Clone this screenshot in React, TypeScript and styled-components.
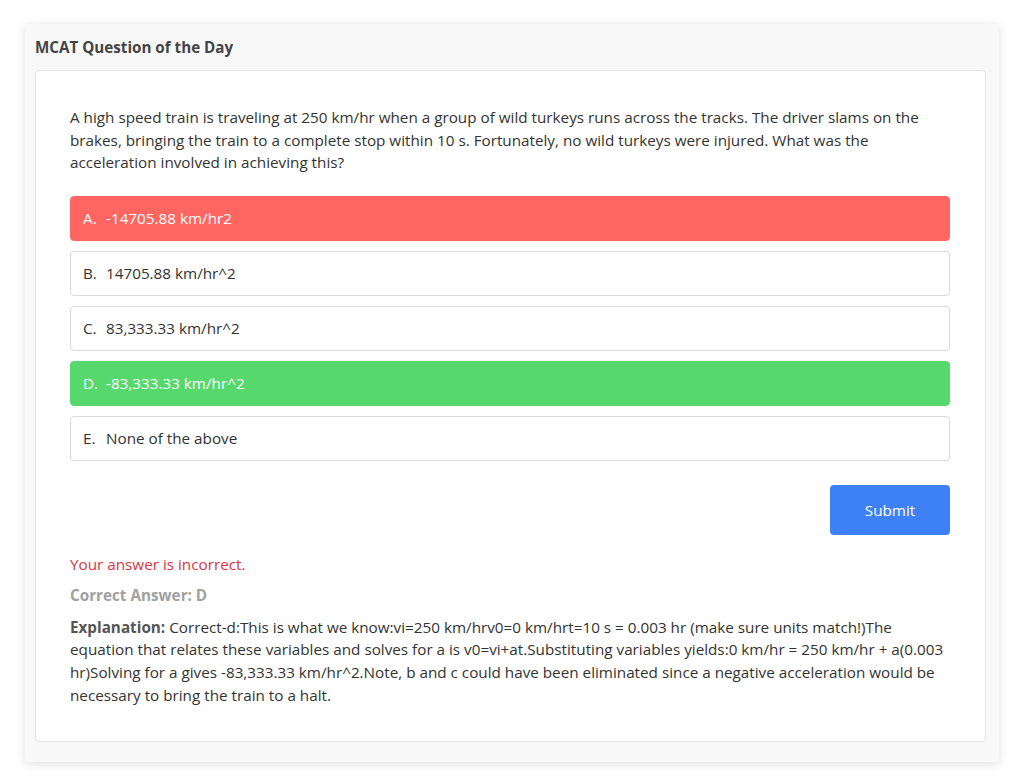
import styled, { createGlobalStyle, css } from 'styled-components';

const GlobalStyle = createGlobalStyle`
  html, body {
    margin: 0;
    padding: 0;
    background: #ffffff;
  }
  body {
    font-family: 'Open Sans', 'Noto Sans', sans-serif;
    color: #333333;
  }
`;

type Status = 'wrong' | 'right' | 'idle';

const choices: { key: string; text: string; status: Status }[] = [
  { key: 'A', text: '-14705.88 km/hr2', status: 'wrong' },
  { key: 'B', text: '14705.88 km/hr^2', status: 'idle' },
  { key: 'C', text: '83,333.33 km/hr^2', status: 'idle' },
  { key: 'D', text: '-83,333.33 km/hr^2', status: 'right' },
  { key: 'E', text: 'None of the above', status: 'idle' },
];

const App = () => {
  return (
    <Page>
      <GlobalStyle />
      <Widget>
        <WidgetTitle>MCAT Question of the Day</WidgetTitle>
        <QuestionCard>
          <Prompt>
            A high speed train is traveling at 250 km/hr when a group of wild turkeys runs across the tracks. The
            driver slams on the brakes, bringing the train to a complete stop within 10 s. Fortunately, no wild
            turkeys were injured. What was the acceleration involved in achieving this?
          </Prompt>
          <ChoiceList>
            {choices.map((c) => (
              <Choice key={c.key} $status={c.status}>
                <ChoiceKey>{c.key}.</ChoiceKey>
                {c.text}
              </Choice>
            ))}
          </ChoiceList>
          <Actions>
            <SubmitButton type="button">Submit</SubmitButton>
          </Actions>
          <Verdict>Your answer is incorrect.</Verdict>
          <CorrectAnswer>Correct Answer: D</CorrectAnswer>
          <Explanation>
            <strong>Explanation:</strong> Correct-d:This is what we know:vi=250 km/hrv0=0 km/hrt=10 s = 0.003 hr
            (make sure units match!)The equation that relates these variables and solves for a is v0=vi+at.Substituting
            variables yields:0 km/hr = 250 km/hr + a(0.003 hr)Solving for a gives -83,333.33 km/hr^2.Note, b and c
            could have been eliminated since a negative acceleration would be necessary to bring the train to a halt.
          </Explanation>
        </QuestionCard>
      </Widget>
    </Page>
  );
};

export default App;

const Page = styled.div`
  padding: 24px 25px 23px 25px;
`;

const Widget = styled.section`
  width: 974px;
  box-sizing: border-box;
  background: #f8f8f9;
  padding: 0 13px 20px 10px;
  box-shadow: 0 2px 10px rgba(0, 0, 0, 0.12);
`;

const WidgetTitle = styled.h2`
  margin: 0;
  height: 46px;
  display: flex;
  align-items: center;
  font-size: 15.2px;
  font-weight: 700;
  color: #444444;
`;

const QuestionCard = styled.div`
  background: #ffffff;
  border: 1px solid #e4e4e6;
  border-radius: 4px;
  padding: 35px 35px 34px 34px;
  font-size: 15.25px;
`;

const Prompt = styled.p`
  margin: 0 0 22px;
  line-height: 22.5px;
  color: #333333;
`;

const ChoiceList = styled.div`
  display: flex;
  flex-direction: column;
  gap: 10px;
`;

const statusStyles = {
  wrong: css`
    background: #ff6561;
    border-color: #ff6561;
    color: #ffffff;
  `,
  right: css`
    background: #56d86c;
    border-color: #56d86c;
    color: #ffffff;
  `,
  idle: css`
    background: #ffffff;
    border-color: #dadada;
    color: #333333;
  `,
};

const Choice = styled.div<{ $status: Status }>`
  height: 45px;
  box-sizing: border-box;
  display: flex;
  align-items: center;
  padding: 0 12px;
  border: 1px solid;
  border-radius: 4px;
  ${(p) => statusStyles[p.$status]}
`;

const ChoiceKey = styled.span`
  display: inline-block;
  width: 23px;
`;

const Actions = styled.div`
  display: flex;
  justify-content: flex-end;
  margin-top: 24px;
`;

const SubmitButton = styled.button`
  width: 120px;
  height: 50px;
  border: none;
  border-radius: 4px;
  background: #3e81f7;
  color: #ffffff;
  font-family: inherit;
  font-size: 15.25px;
  cursor: pointer;
`;

const Verdict = styled.p`
  margin: 18px 0 0;
  line-height: 22px;
  color: #dc3545;
`;

const CorrectAnswer = styled.p`
  margin: 9px 0 0;
  line-height: 22px;
  font-weight: 700;
  color: #a0a0a0;
`;

const Explanation = styled.p`
  margin: 10px 0 0;
  line-height: 22.8px;
  color: #333333;
  > strong {
    color: #555555;
  }
`;
